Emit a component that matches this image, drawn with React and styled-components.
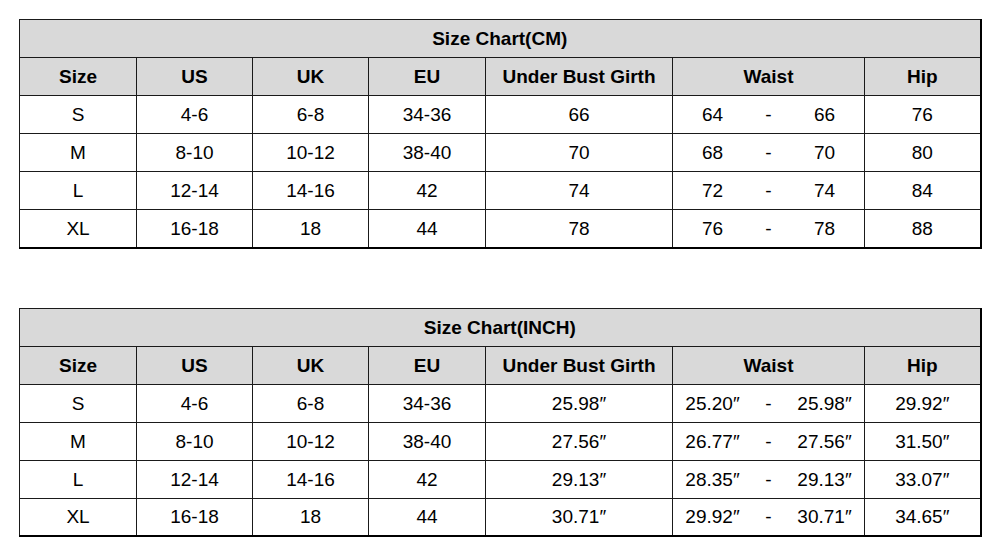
import React from "react";
import styled, { createGlobalStyle } from "styled-components";

const Global = createGlobalStyle`
  html, body { margin: 0; padding: 0; background: #fff; }
  body { font-family: "Liberation Sans", Arial, sans-serif; color: #000; }
`;

const Page = styled.div`
  width: 1001px;
  padding: 19px 0 0 19px;
  box-sizing: border-box;
  display: flex;
  flex-direction: column;
  gap: 59px;
`;

const Table = styled.table`
  border-collapse: collapse;
  table-layout: fixed;
  width: 962px;
  font-size: 19px;
  border-right: 2px solid #000;
  border-bottom: 2px solid #000;
`;

const Row = styled.tr`
  height: 38px;
`;

const Cell = styled.td`
  padding: 1px 0 0;
  border: 1px solid #1a1a1a;
  text-align: center;
  vertical-align: middle;
  box-sizing: border-box;
  background: ${(p) => (p.$head ? "#d9d9d9" : "#fff")};
  font-weight: ${(p) => (p.$head ? 700 : 400)};
  white-space: nowrap;
`;

const Range = styled.div`
  display: grid;
  grid-template-columns: repeat(3, 56px);
  justify-content: center;
  justify-items: center;
`;

const widths = [117, 116, 116, 117, 187, 192, 116];
const headers = ["Size", "US", "UK", "EU", "Under Bust Girth", "Waist", "Hip"];

const base = [
  ["S", "4-6", "6-8", "34-36"],
  ["M", "8-10", "10-12", "38-40"],
  ["L", "12-14", "14-16", "42"],
  ["XL", "16-18", "18", "44"],
];

const cm = [
  ["66", "64", "66", "76"],
  ["70", "68", "70", "80"],
  ["74", "72", "74", "84"],
  ["78", "76", "78", "88"],
];

const inch = [
  ["25.98″", "25.20″", "25.98″", "29.92″"],
  ["27.56″", "26.77″", "27.56″", "31.50″"],
  ["29.13″", "28.35″", "29.13″", "33.07″"],
  ["30.71″", "29.92″", "30.71″", "34.65″"],
];

function Chart({ title, data }) {
  return (
    <Table>
      <colgroup>
        {widths.map((w, i) => (
          <col key={i} style={{ width: w }} />
        ))}
      </colgroup>
      <tbody>
        <Row>
          <Cell $head colSpan={7}>{title}</Cell>
        </Row>
        <Row>
          {headers.map((h) => (
            <Cell $head key={h}>{h}</Cell>
          ))}
        </Row>
        {base.map((row, r) => (
          <Row key={r}>
            {row.map((v, i) => (
              <Cell key={i}>{v}</Cell>
            ))}
            <Cell>{data[r][0]}</Cell>
            <Cell>
              <Range>
                <span>{data[r][1]}</span>
                <span>-</span>
                <span>{data[r][2]}</span>
              </Range>
            </Cell>
            <Cell>{data[r][3]}</Cell>
          </Row>
        ))}
      </tbody>
    </Table>
  );
}

export default function App() {
  return (
    <>
      <Global />
      <Page>
        <Chart title="Size Chart(CM)" data={cm} />
        <Chart title="Size Chart(INCH)" data={inch} />
      </Page>
    </>
  );
}
